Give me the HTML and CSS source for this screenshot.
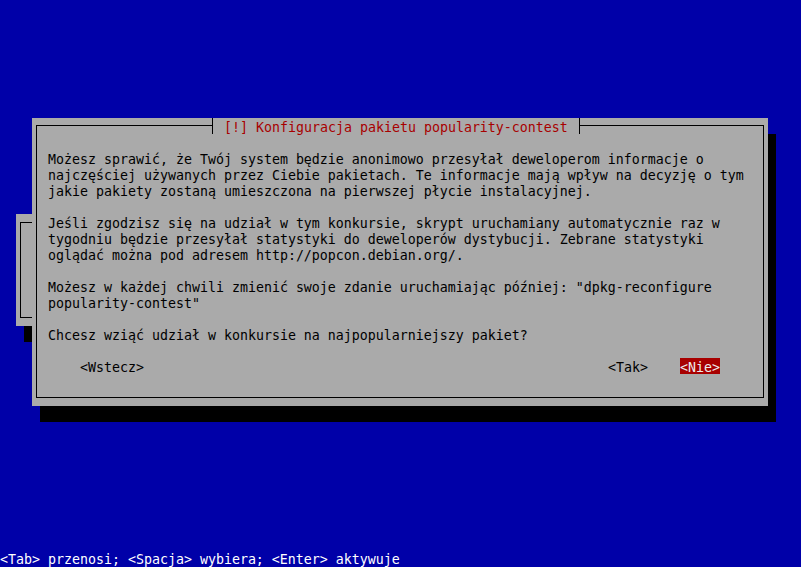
FILE: index.html
```html
<!DOCTYPE html>
<html lang="pl">
<head>
<meta charset="utf-8">
<title>Konfiguracja pakietu popularity-contest</title>
<link rel="stylesheet" href="styles.css">
</head>
<body>
<div class="screen">
  <div class="bgwin"><div class="bgframe"></div></div>
  <div class="dialog">
    <div class="title">[!] Konfiguracja pakietu popularity-contest</div>
    <div class="frame">
      <div class="para">Możesz sprawić, że Twój system będzie anonimowo przesyłał deweloperom informacje o
najczęściej używanych przez Ciebie pakietach. Te informacje mają wpływ na decyzję o tym
jakie pakiety zostaną umieszczona na pierwszej płycie instalacyjnej.</div>
      <div class="para">Jeśli zgodzisz się na udział w tym konkursie, skrypt uruchamiany automatycznie raz w
tygodniu będzie przesyłał statystyki do deweloperów dystybucji. Zebrane statystyki
oglądać można pod adresem http://popcon.debian.org/.</div>
      <div class="para">Możesz w każdej chwili zmienić swoje zdanie uruchamiając później: "dpkg-reconfigure
popularity-contest"</div>
      <div class="para">Chcesz wziąć udział w konkursie na najpopularniejszy pakiet?</div>
      <div class="buttons">
        <span class="btn back">&lt;Wstecz&gt;</span>
        <span class="btn yes">&lt;Tak&gt;</span>
        <span class="btn no">&lt;Nie&gt;</span>
      </div>
    </div>
  </div>
  <div class="status">&lt;Tab&gt; przenosi; &lt;Spacja&gt; wybiera; &lt;Enter&gt; aktywuje</div>
</div>
</body>
</html>
```
FILE: styles.css
```css
html, body {
  margin: 0;
  padding: 0;
  background: #0000a8;
}

.screen {
  position: relative;
  width: 801px;
  height: 567px;
  overflow: hidden;
  background: #0000a8;
  font-family: "DejaVu Sans Mono", "Liberation Mono", monospace;
  font-size: 13.29px;
  line-height: 16px;
  display: flex;
  flex-direction: column;
  box-sizing: border-box;
  padding-bottom: 1px;
}

.bgwin {
  position: absolute;
  left: 16px;
  top: 214px;
  width: 736px;
  height: 112px;
  background: #aaaaaa;
  box-shadow: 8px 16px 0 0 #000;
  box-sizing: border-box;
  padding: 8px 4px 8px 4px;
}

.bgframe {
  height: 100%;
  border: 1px solid #000;
  box-sizing: border-box;
}

.dialog {
  position: absolute;
  left: 32px;
  top: 118px;
  width: 736px;
  height: 288px;
  background: #aaaaaa;
  box-shadow: 8px 16px 0 0 #000;
  box-sizing: border-box;
  padding: 7px 4px 8px 4px;
}

.title {
  position: absolute;
  left: 180px;
  top: 0;
  height: 16px;
  box-sizing: border-box;
  padding: 2px 11px 0 11px;
  background: #aaaaaa;
  border-left: 1px solid #000;
  border-right: 1px solid #000;
  color: #a80000;
  white-space: pre;
}

.frame {
  height: 100%;
  box-sizing: border-box;
  border: 1px solid #000;
  padding: 26px 0 0 11px;
  display: flex;
  flex-direction: column;
  color: #000;
}

.para {
  white-space: pre;
  margin-bottom: 16px;
}

.buttons {
  display: flex;
  white-space: pre;
  margin-left: 32px;
}

.btn.back {
  margin-right: auto;
}

.btn.yes {
  margin-right: 32px;
}

.btn.no {
  margin-right: 43px;
  margin-top: -2px;
  padding-top: 2px;
  height: 16px;
  box-sizing: border-box;
  background: #a80000;
  color: #ececec;
}

.status {
  margin-top: auto;
  height: 16px;
  box-sizing: border-box;
  padding-top: 2px;
  color: #ffffff;
  white-space: pre;
}
```
